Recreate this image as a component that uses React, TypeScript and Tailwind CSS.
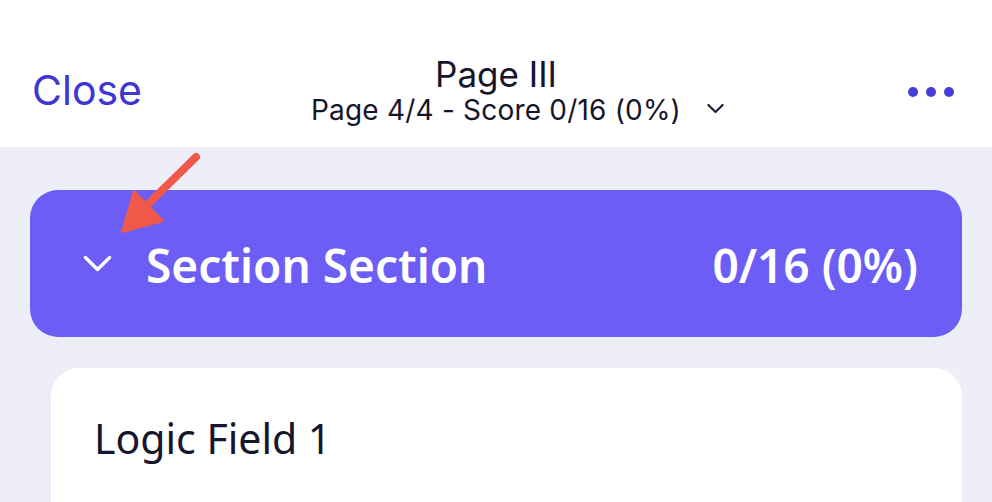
import React from 'react';

const Chevron = ({ className, stroke = 2.5 }: { className?: string; stroke?: number }) => (
  <svg viewBox="0 0 24 14" className={className} fill="none" stroke="currentColor" strokeWidth={stroke} strokeLinecap="round" strokeLinejoin="round">
    <path d="M2 2 L12 12 L22 2" />
  </svg>
);

export default function App() {
  return (
    <div className="relative w-[992px] h-[502px] overflow-hidden bg-[#eeeef9]">
      {/* header */}
      <header className="h-[147px] bg-white flex items-center px-[32px] font-[family-name:Inter,sans-serif]">
        <button className="w-[200px] text-left text-[41px] leading-none text-[#3f36d3] pt-[34px]">Close</button>
        <div className="flex-1 flex justify-center pt-[34px]">
          <div className="w-[43px]" />
          <div className="flex flex-col items-center text-[#15152b]">
            <div className="text-[35px] leading-[38px]">Page III</div>
            <div className="text-[28px] leading-[34px] tracking-[0.2px]">Page 4/4 - Score 0/16 (0%)</div>
          </div>
          <Chevron className="w-[17px] h-[11px] text-[#1c1c38] ml-[26px] mt-[48px]" stroke={3} />
        </div>
        <div className="w-[200px] flex justify-end gap-[8px] pt-[36px] pr-[6px]">
          <span className="w-[10px] h-[10px] rounded-full bg-[#463cd8]" />
          <span className="w-[10px] h-[10px] rounded-full bg-[#463cd8]" />
          <span className="w-[10px] h-[10px] rounded-full bg-[#463cd8]" />
        </div>
      </header>

      <main className="px-[30px] pt-[43px] font-[family-name:Noto_Sans,sans-serif]">
        <div className="h-[147px] rounded-[28px] bg-[#6c5ef5] flex items-center pl-[53px] pr-[44px] text-white">
          <Chevron className="w-[29px] h-[17px]" stroke={2.8} />
          <div className="ml-[34px] flex-1 text-[46px] font-semibold leading-none mt-[3px]">Section Section</div>
          <div className="text-[46px] font-semibold leading-none mt-[3px]">0/16 (0%)</div>
        </div>
        <div className="mt-[31px] ml-[21px] h-[200px] rounded-t-[28px] bg-white pl-[43px] pt-[50px]">
          <div className="text-[41px] leading-none text-[#16162e]">Logic Field 1</div>
        </div>
      </main>

      {/* annotation arrow */}
      <svg className="absolute left-0 top-0 pointer-events-none" width="992" height="502">
        <line x1="196" y1="157" x2="142" y2="210" stroke="#f0584a" strokeWidth="8" strokeLinecap="round" />
        <polygon points="122,232 134,191 163,221" fill="#f0584a" strokeLinejoin="round" stroke="#f0584a" strokeWidth="2" />
      </svg>
    </div>
  );
}
